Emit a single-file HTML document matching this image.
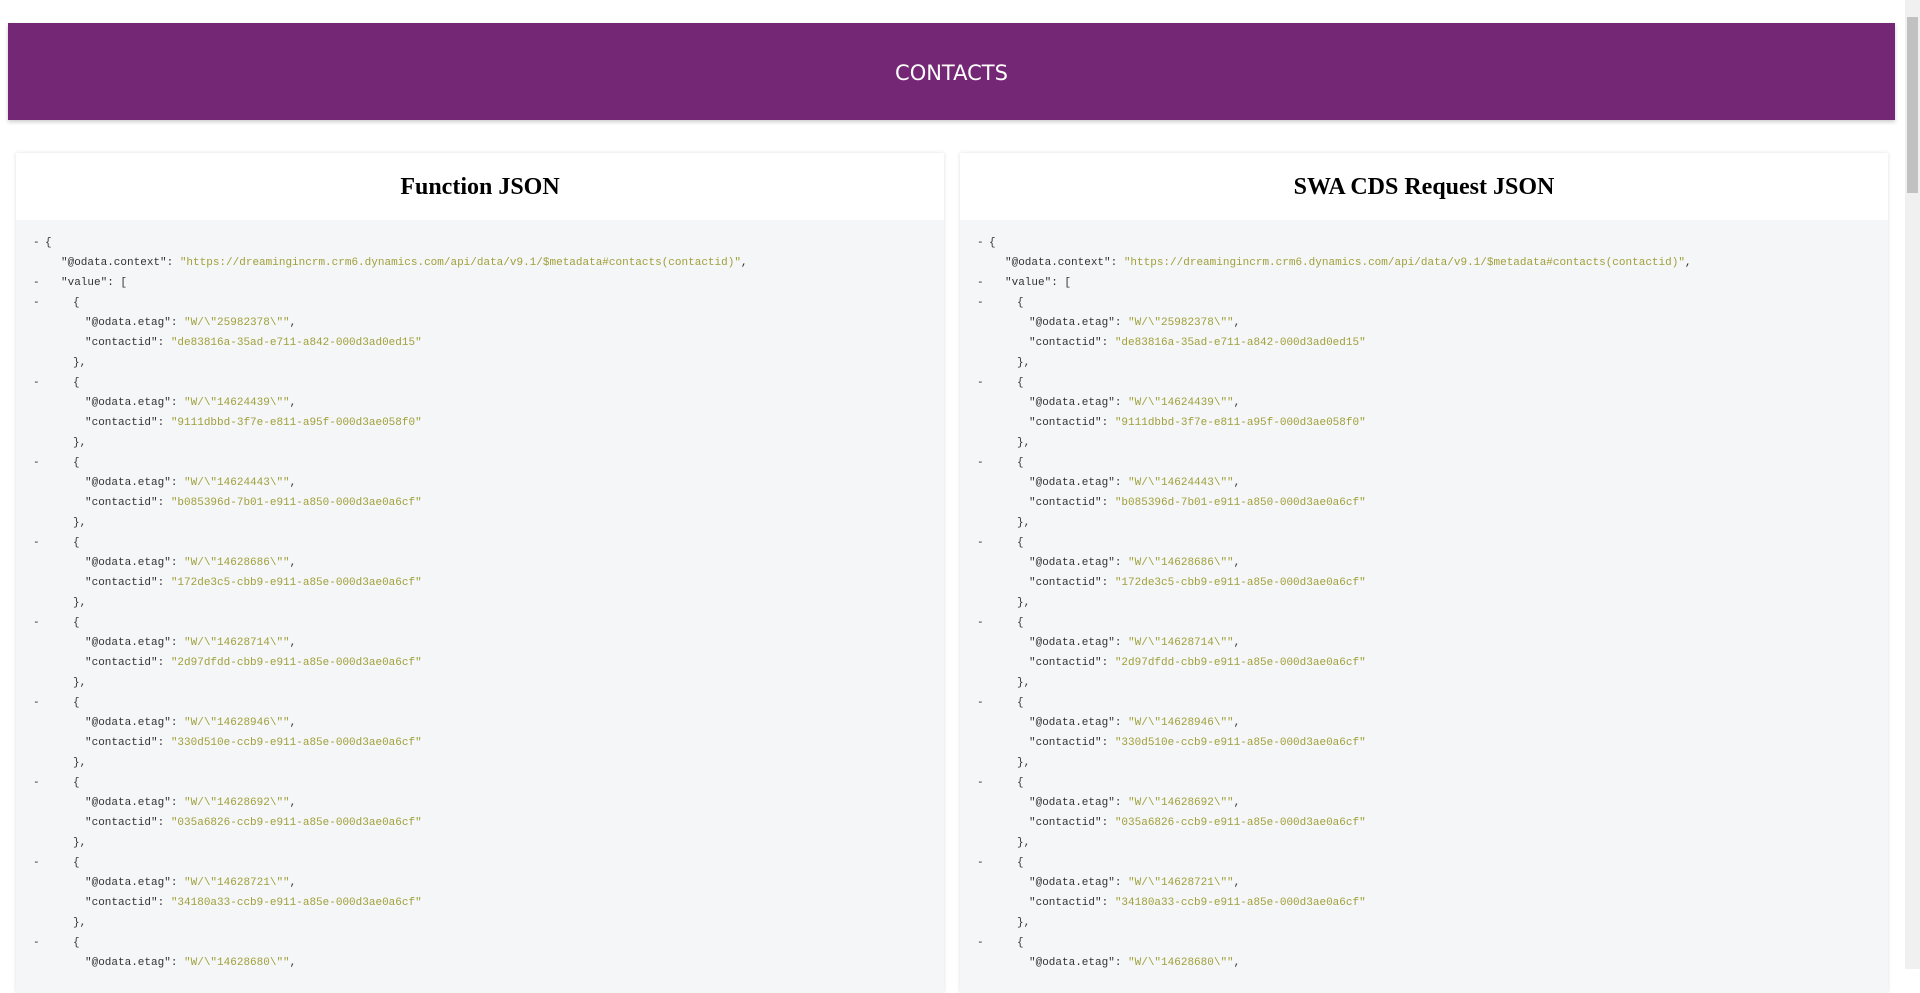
<!DOCTYPE html>
<html><head><meta charset="utf-8"><style>
html,body{margin:0;padding:0;width:1920px;height:969px;overflow:hidden;background:#fff;}
.hdr{position:absolute;left:8px;top:23px;width:1887px;height:97px;background:#742774;box-shadow:0 2px 4px rgba(0,0,0,.2);color:#fff;font-family:"DejaVu Sans","Liberation Sans",sans-serif;font-size:21px;text-align:center;line-height:101px;}
.card{position:absolute;top:153px;width:928px;height:840px;background:#fff;box-shadow:0 0 4px rgba(0,0,0,.12);}
.card h2{margin:0;height:67px;line-height:69px;text-align:center;font-family:"Liberation Serif",serif;font-weight:bold;font-size:24px;color:#000;}
.code{position:absolute;top:67px;left:0;right:0;bottom:0;background:#f5f6f7;font-family:"Liberation Mono",monospace;font-size:11px;color:#333;padding-top:13px;}
.l{position:relative;height:20px;line-height:20px;white-space:pre;}
.d{position:absolute;left:17px;}
.s{color:#a0a03c;}
.sb{position:absolute;right:0;top:0;width:15px;height:969px;background:#f0f0f0;}
.th{position:absolute;right:2px;top:17px;width:11px;height:176px;background:#c1c1c1;}
</style></head><body>
<div class="hdr">CONTACTS</div>

<div class="card" style="left:16px">
<h2>Function JSON</h2>
<div class="code">
<div class="l"><span class="d">- </span><span style="padding-left:29px">{</span></div>
<div class="l"><span style="padding-left:45px">"@odata.context": <span class="s">"https://dreamingincrm.crm6.dynamics.com/api/data/v9.1/$metadata#contacts(contactid)"</span>,</span></div>
<div class="l"><span class="d">-</span><span style="padding-left:45px">"value": [</span></div>
<div class="l"><span class="d">-</span><span style="padding-left:57px">{</span></div>
<div class="l"><span style="padding-left:69px">"@odata.etag": <span class="s">"W/\"25982378\""</span>,</span></div>
<div class="l"><span style="padding-left:69px">"contactid": <span class="s">"de83816a-35ad-e711-a842-000d3ad0ed15"</span></span></div>
<div class="l"><span style="padding-left:57px">},</span></div>
<div class="l"><span class="d">-</span><span style="padding-left:57px">{</span></div>
<div class="l"><span style="padding-left:69px">"@odata.etag": <span class="s">"W/\"14624439\""</span>,</span></div>
<div class="l"><span style="padding-left:69px">"contactid": <span class="s">"9111dbbd-3f7e-e811-a95f-000d3ae058f0"</span></span></div>
<div class="l"><span style="padding-left:57px">},</span></div>
<div class="l"><span class="d">-</span><span style="padding-left:57px">{</span></div>
<div class="l"><span style="padding-left:69px">"@odata.etag": <span class="s">"W/\"14624443\""</span>,</span></div>
<div class="l"><span style="padding-left:69px">"contactid": <span class="s">"b085396d-7b01-e911-a850-000d3ae0a6cf"</span></span></div>
<div class="l"><span style="padding-left:57px">},</span></div>
<div class="l"><span class="d">-</span><span style="padding-left:57px">{</span></div>
<div class="l"><span style="padding-left:69px">"@odata.etag": <span class="s">"W/\"14628686\""</span>,</span></div>
<div class="l"><span style="padding-left:69px">"contactid": <span class="s">"172de3c5-cbb9-e911-a85e-000d3ae0a6cf"</span></span></div>
<div class="l"><span style="padding-left:57px">},</span></div>
<div class="l"><span class="d">-</span><span style="padding-left:57px">{</span></div>
<div class="l"><span style="padding-left:69px">"@odata.etag": <span class="s">"W/\"14628714\""</span>,</span></div>
<div class="l"><span style="padding-left:69px">"contactid": <span class="s">"2d97dfdd-cbb9-e911-a85e-000d3ae0a6cf"</span></span></div>
<div class="l"><span style="padding-left:57px">},</span></div>
<div class="l"><span class="d">-</span><span style="padding-left:57px">{</span></div>
<div class="l"><span style="padding-left:69px">"@odata.etag": <span class="s">"W/\"14628946\""</span>,</span></div>
<div class="l"><span style="padding-left:69px">"contactid": <span class="s">"330d510e-ccb9-e911-a85e-000d3ae0a6cf"</span></span></div>
<div class="l"><span style="padding-left:57px">},</span></div>
<div class="l"><span class="d">-</span><span style="padding-left:57px">{</span></div>
<div class="l"><span style="padding-left:69px">"@odata.etag": <span class="s">"W/\"14628692\""</span>,</span></div>
<div class="l"><span style="padding-left:69px">"contactid": <span class="s">"035a6826-ccb9-e911-a85e-000d3ae0a6cf"</span></span></div>
<div class="l"><span style="padding-left:57px">},</span></div>
<div class="l"><span class="d">-</span><span style="padding-left:57px">{</span></div>
<div class="l"><span style="padding-left:69px">"@odata.etag": <span class="s">"W/\"14628721\""</span>,</span></div>
<div class="l"><span style="padding-left:69px">"contactid": <span class="s">"34180a33-ccb9-e911-a85e-000d3ae0a6cf"</span></span></div>
<div class="l"><span style="padding-left:57px">},</span></div>
<div class="l"><span class="d">-</span><span style="padding-left:57px">{</span></div>
<div class="l"><span style="padding-left:69px">"@odata.etag": <span class="s">"W/\"14628680\""</span>,</span></div>
</div>
</div>

<div class="card" style="left:960px">
<h2>SWA CDS Request JSON</h2>
<div class="code">
<div class="l"><span class="d">- </span><span style="padding-left:29px">{</span></div>
<div class="l"><span style="padding-left:45px">"@odata.context": <span class="s">"https://dreamingincrm.crm6.dynamics.com/api/data/v9.1/$metadata#contacts(contactid)"</span>,</span></div>
<div class="l"><span class="d">-</span><span style="padding-left:45px">"value": [</span></div>
<div class="l"><span class="d">-</span><span style="padding-left:57px">{</span></div>
<div class="l"><span style="padding-left:69px">"@odata.etag": <span class="s">"W/\"25982378\""</span>,</span></div>
<div class="l"><span style="padding-left:69px">"contactid": <span class="s">"de83816a-35ad-e711-a842-000d3ad0ed15"</span></span></div>
<div class="l"><span style="padding-left:57px">},</span></div>
<div class="l"><span class="d">-</span><span style="padding-left:57px">{</span></div>
<div class="l"><span style="padding-left:69px">"@odata.etag": <span class="s">"W/\"14624439\""</span>,</span></div>
<div class="l"><span style="padding-left:69px">"contactid": <span class="s">"9111dbbd-3f7e-e811-a95f-000d3ae058f0"</span></span></div>
<div class="l"><span style="padding-left:57px">},</span></div>
<div class="l"><span class="d">-</span><span style="padding-left:57px">{</span></div>
<div class="l"><span style="padding-left:69px">"@odata.etag": <span class="s">"W/\"14624443\""</span>,</span></div>
<div class="l"><span style="padding-left:69px">"contactid": <span class="s">"b085396d-7b01-e911-a850-000d3ae0a6cf"</span></span></div>
<div class="l"><span style="padding-left:57px">},</span></div>
<div class="l"><span class="d">-</span><span style="padding-left:57px">{</span></div>
<div class="l"><span style="padding-left:69px">"@odata.etag": <span class="s">"W/\"14628686\""</span>,</span></div>
<div class="l"><span style="padding-left:69px">"contactid": <span class="s">"172de3c5-cbb9-e911-a85e-000d3ae0a6cf"</span></span></div>
<div class="l"><span style="padding-left:57px">},</span></div>
<div class="l"><span class="d">-</span><span style="padding-left:57px">{</span></div>
<div class="l"><span style="padding-left:69px">"@odata.etag": <span class="s">"W/\"14628714\""</span>,</span></div>
<div class="l"><span style="padding-left:69px">"contactid": <span class="s">"2d97dfdd-cbb9-e911-a85e-000d3ae0a6cf"</span></span></div>
<div class="l"><span style="padding-left:57px">},</span></div>
<div class="l"><span class="d">-</span><span style="padding-left:57px">{</span></div>
<div class="l"><span style="padding-left:69px">"@odata.etag": <span class="s">"W/\"14628946\""</span>,</span></div>
<div class="l"><span style="padding-left:69px">"contactid": <span class="s">"330d510e-ccb9-e911-a85e-000d3ae0a6cf"</span></span></div>
<div class="l"><span style="padding-left:57px">},</span></div>
<div class="l"><span class="d">-</span><span style="padding-left:57px">{</span></div>
<div class="l"><span style="padding-left:69px">"@odata.etag": <span class="s">"W/\"14628692\""</span>,</span></div>
<div class="l"><span style="padding-left:69px">"contactid": <span class="s">"035a6826-ccb9-e911-a85e-000d3ae0a6cf"</span></span></div>
<div class="l"><span style="padding-left:57px">},</span></div>
<div class="l"><span class="d">-</span><span style="padding-left:57px">{</span></div>
<div class="l"><span style="padding-left:69px">"@odata.etag": <span class="s">"W/\"14628721\""</span>,</span></div>
<div class="l"><span style="padding-left:69px">"contactid": <span class="s">"34180a33-ccb9-e911-a85e-000d3ae0a6cf"</span></span></div>
<div class="l"><span style="padding-left:57px">},</span></div>
<div class="l"><span class="d">-</span><span style="padding-left:57px">{</span></div>
<div class="l"><span style="padding-left:69px">"@odata.etag": <span class="s">"W/\"14628680\""</span>,</span></div>
</div>
</div>

<div class="sb"><div class="th"></div></div>
</body></html>
